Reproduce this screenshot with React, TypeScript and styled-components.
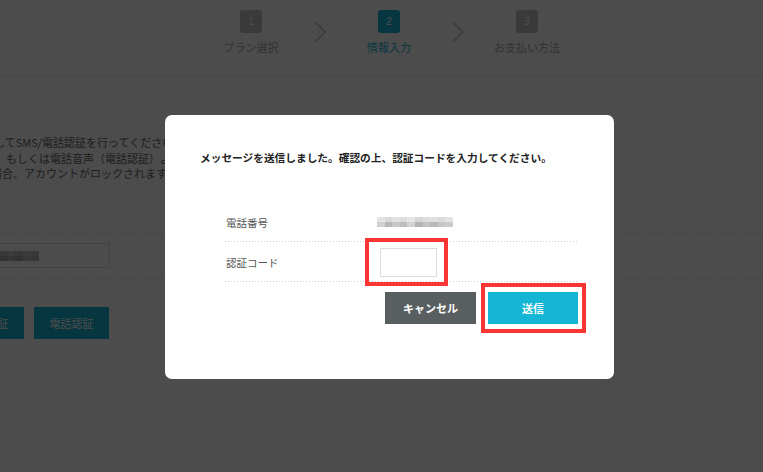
import React from 'react';
import styled, { createGlobalStyle } from 'styled-components';

const GlobalStyle = createGlobalStyle`
  html, body {
    margin: 0;
    padding: 0;
    background: #fff;
    overflow: hidden;
  }
  body {
    font-family: "Noto Sans CJK JP", "Noto Sans", sans-serif;
  }
`;

const steps = [
    { n: 1, label: 'プラン選択', active: false },
    { n: 2, label: '情報入力', active: true },
    { n: 3, label: 'お支払い方法', active: false },
];

const noticeLines = [
    { text: 'してSMS/電話認証を行ってください。', shift: -6 },
    { text: '、もしくは電話音声（電話認証）よりお知らせします。', shift: -5 },
    { text: '場合、アカウントがロックされます。', shift: -9 },
];

// mosaic shades for the blurred phone number
const modalMosaic = [
    '#e4e4e4', '#d8d8d8', '#e2e2e2', '#dcdcdc', '#e6e6e6', '#d6d6d6', '#dedede', '#e0e0e0', '#d9d9d9', '#e3e3e3',
    '#d0d0d0', '#b8b8b8', '#c8c8c8', '#bdbdbd', '#d2d2d2', '#b4b4b4', '#c4c4c4', '#b9b9b9', '#c6c6c6', '#cbcbcb',
];

const pageMosaic = [
    '#d0d0d0', '#bcbcbc', '#c8c8c8', '#b6b6b6', '#cacaca', '#bdbdbd',
    '#c2c2c2', '#a9a9a9', '#bababa', '#a4a4a4', '#bfbfbf', '#b0b0b0',
];

const App: React.FunctionComponent = (): JSX.Element => {
    return (
        <>
            <GlobalStyle />
            <Page>
                <Header>
                    <StepList>
                        {steps.map((step, i) => (
                            <React.Fragment key={step.n}>
                                {i > 0 && (
                                    <Chevron>
                                        <svg width="12" height="22" viewBox="0 0 12 22">
                                            <polyline
                                                points="1,1 11,11 1,21"
                                                fill="none"
                                                stroke="#b4b4b4"
                                                strokeWidth="1.2"
                                            />
                                        </svg>
                                    </Chevron>
                                )}
                                <Step>
                                    <StepBox $active={step.active}>{step.n}</StepBox>
                                    <StepLabel $active={step.active}>{step.label}</StepLabel>
                                </Step>
                            </React.Fragment>
                        ))}
                    </StepList>
                </Header>

                <Main>
                    <Notice>
                        {noticeLines.map((line) => (
                            <NoticeLine key={line.text} $shift={line.shift}>
                                {line.text}
                            </NoticeLine>
                        ))}
                    </Notice>
                    <FieldRow>
                        <PageInput>
                            <Mosaic $cols={6} $cell={8}>
                                {pageMosaic.map((c, i) => (
                                    <MosaicCell key={i} $shade={c} />
                                ))}
                            </Mosaic>
                        </PageInput>
                    </FieldRow>
                    <PageButtons>
                        <PageButton>SMS認証</PageButton>
                        <PageButton>電話認証</PageButton>
                    </PageButtons>
                </Main>
            </Page>

            <Overlay>
                <Modal>
                    <Message>
                        メッセージを送信しました。確認の上、認証コードを入力してください。
                    </Message>
                    <Table>
                        <Row>
                            <Label>電話番号</Label>
                            <Value>
                                <Mosaic $cols={10} $cell={7.6}>
                                    {modalMosaic.map((c, i) => (
                                        <MosaicCell key={i} $shade={c} />
                                    ))}
                                </Mosaic>
                            </Value>
                        </Row>
                        <Row>
                            <Label>認証コード</Label>
                            <Value>
                                <Marked $box="-10px -11px -9px -12px">
                                    <CodeInput type="text" />
                                </Marked>
                            </Value>
                        </Row>
                    </Table>
                    <Actions>
                        <Button $variant="cancel">キャンセル</Button>
                        <Marked $box="-9px -8px -9px -7px">
                            <Button $variant="send">送信</Button>
                        </Marked>
                    </Actions>
                </Modal>
            </Overlay>
        </>
    );
};

export default App;

const Page = styled.div`
    width: 763px;
    height: 472px;
    overflow: hidden;
`;

const Header = styled.header`
    box-sizing: border-box;
    height: 76px;
    border-bottom: 1px solid #e6e6e6;
    display: flex;
    justify-content: center;
    padding-left: 15px;
`;

const StepList = styled.div`
    display: flex;
    align-items: flex-start;
`;

const Step = styled.div`
    width: 100px;
    padding-top: 10px;
    display: flex;
    flex-direction: column;
    align-items: center;
`;

const StepBox = styled.div<{ $active?: boolean }>`
    width: 22px;
    height: 23px;
    border-radius: 3px;
    background: ${(p) => (p.$active ? '#14b5d5' : '#c4c4c4')};
    color: #fff;
    font-family: "Liberation Sans", sans-serif;
    font-size: 10px;
    line-height: 23px;
    text-align: center;
`;

const StepLabel = styled.div<{ $active?: boolean }>`
    margin-top: 7px;
    font-size: 11px;
    line-height: 14px;
    color: ${(p) => (p.$active ? '#14b5d5' : '#a8a8a8')};
    white-space: nowrap;
`;

const Chevron = styled.div`
    width: 38px;
    padding-top: 21px;
    display: flex;
    justify-content: center;
`;

const Main = styled.main`
    padding-top: 59px;
`;

const Notice = styled.div`
    font-size: 11px;
    line-height: 15.5px;
    color: #666;
    white-space: nowrap;
`;

const NoticeLine = styled.div<{ $shift: number }>`
    margin-left: ${(p) => p.$shift}px;
`;

const FieldRow = styled.div`
    margin-top: 51px;
    height: 46px;
    box-sizing: border-box;
    display: flex;
    align-items: center;
    background:
        linear-gradient(to right, #d4d4d4 1px, transparent 1px) top left / 3px 1px repeat-x,
        linear-gradient(to right, #d4d4d4 1px, transparent 1px) bottom left / 3px 1px repeat-x;
`;

const PageInput = styled.div`
    margin-left: -100px;
    width: 210px;
    height: 25px;
    box-sizing: border-box;
    border: 1px solid #e2e2e2;
    display: flex;
    align-items: center;
    padding-left: 90px;
`;

const PageButtons = styled.div`
    margin-top: 28px;
    margin-left: -51px;
    display: flex;
    gap: 10px;
`;

const PageButton = styled.div`
    width: 75px;
    height: 32px;
    background: #14b5d5;
    color: #fff;
    font-size: 11px;
    line-height: 32px;
    text-align: center;
`;

const Mosaic = styled.div<{ $cols: number; $cell: number }>`
    display: grid;
    grid-template-columns: repeat(${(p) => p.$cols}, ${(p) => p.$cell}px);
    grid-auto-rows: 5px;
`;

const MosaicCell = styled.span<{ $shade: string }>`
    background: ${(p) => p.$shade};
`;

const Overlay = styled.div`
    position: fixed;
    inset: 0;
    background: rgba(0, 0, 0, 0.7);
    display: flex;
    justify-content: center;
    align-items: flex-start;
    padding: 115px 0 0 16px;
    box-sizing: border-box;
`;

const Modal = styled.div`
    width: 449px;
    box-sizing: border-box;
    padding: 35px 36px 55px 35px;
    background: #fff;
    border-radius: 7px;
`;

const Message = styled.p`
    margin: 0;
    font-size: 10.7px;
    line-height: 16px;
    font-weight: 700;
    color: #222;
    white-space: nowrap;
`;

const Table = styled.div`
    margin: 36px 0 0 25px;
`;

const Row = styled.div`
    height: 40px;
    display: flex;
    align-items: center;
    background: linear-gradient(to right, #cfcfcf 1px, transparent 1px) bottom left / 3px 1px repeat-x;
`;

const Label = styled.div`
    width: 152px;
    padding-left: 1px;
    box-sizing: border-box;
    font-size: 10.5px;
    color: #555;
`;

const Value = styled.div`
    display: flex;
    align-items: center;
`;

const Marked = styled.span<{ $box: string }>`
    position: relative;
    display: inline-flex;
    &::after {
        content: '';
        position: absolute;
        inset: ${(p) => p.$box};
        border: 4px solid #fb3434;
        pointer-events: none;
    }
`;

const CodeInput = styled.input`
    margin: 0 0 0 3px;
    width: 57px;
    height: 29px;
    box-sizing: border-box;
    border: 1px solid #dcdcdc;
    outline: none;
    padding: 0 4px;
`;

const Actions = styled.div`
    margin-top: 10px;
    display: flex;
    justify-content: flex-end;
    gap: 12px;
`;

const Button = styled.button<{ $variant: 'cancel' | 'send' }>`
    width: ${(p) => (p.$variant === 'cancel' ? 91 : 90)}px;
    height: 32px;
    border: none;
    padding: 0;
    background: ${(p) => (p.$variant === 'cancel' ? '#595f60' : '#14b5d5')};
    color: #fff;
    font-family: "Noto Sans CJK JP", sans-serif;
    font-size: 11px;
    font-weight: 700;
    cursor: pointer;
`;
